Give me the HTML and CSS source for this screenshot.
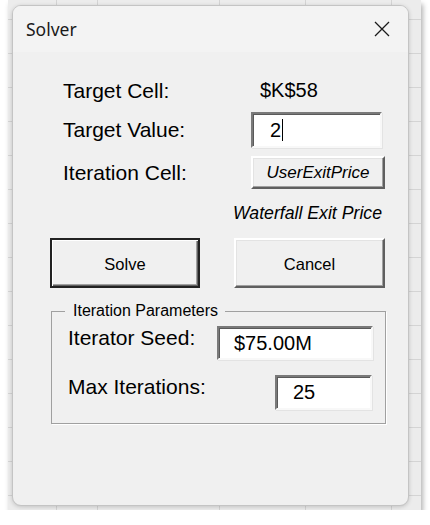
FILE: index.html
```html
<!DOCTYPE html>
<html>
<head>
<meta charset="utf-8">
<link rel="stylesheet" href="styles.css">
</head>
<body>
<div class="backdrop">
  <div class="dialog">
    <div class="titlebar">
      <span class="title">Solver</span>
      <svg class="close" viewBox="0 0 16 16" width="16" height="16"><path d="M1 1 L15 15 M15 1 L1 15" stroke="#1a1a1a" stroke-width="1.3" fill="none"/></svg>
    </div>
    <div class="body">
      <div class="row row-cell"><span class="label">Target Cell:</span><span class="cellref">$K$58</span></div>
      <div class="row row-value"><span class="label">Target Value:</span><div class="field field-target">2<span class="caret"></span></div></div>
      <div class="row row-iter"><span class="label">Iteration Cell:</span><div class="btn btn-raised btn-ref">UserExitPrice</div></div>
      <div class="caption">Waterfall Exit Price</div>
      <div class="actions">
        <div class="btn btn-default">Solve</div>
        <div class="btn btn-raised btn-cancel">Cancel</div>
      </div>
      <fieldset class="group">
        <legend>Iteration Parameters</legend>
        <div class="grow grow-seed"><span class="glabel">Iterator Seed:</span><div class="field field-seed">$75.00M</div></div>
        <div class="grow grow-max"><span class="glabel">Max Iterations:</span><div class="field field-max">25</div></div>
      </fieldset>
    </div>
  </div>
</div>
</body>
</html>
```
FILE: styles.css
```css
body {
  margin: 0;
  background: #fff;
  font-family: "Liberation Sans", Arial, sans-serif;
  color: #000;
}
.backdrop {
  margin-left: 8px;
  width: 413px;
  height: 510px;
  box-sizing: border-box;
  padding: 5px 0 0 4px;
  background-color: #ececec;
  background-image:
    linear-gradient(#d4d4d4, #d4d4d4),
    linear-gradient(#d4d4d4, #d4d4d4),
    linear-gradient(#d4d4d4, #d4d4d4),
    linear-gradient(#d4d4d4, #d4d4d4),
    linear-gradient(#d4d4d4, #d4d4d4),
    repeating-linear-gradient(to bottom, transparent 0, transparent 19px, #d4d4d4 19px, #d4d4d4 20px, transparent 20px, transparent 34px);
  background-size: 1px 100%, 1px 100%, 1px 100%, 1px 100%, 1px 100%, 100% 100%;
  background-position: 48px 0, 89px 0, 211px 0, 297px 0, 383px 0, 0 0;
  background-repeat: no-repeat;
  box-shadow: 2px 4px 5px rgba(0, 0, 0, 0.3);
}
.dialog {
  width: 397px;
  height: 501px;
  box-sizing: border-box;
  border: 1px solid #c4c4c4;
  border-radius: 9px;
  background: #f0f0f0;
  box-shadow: 0 1px 4px rgba(0, 0, 0, 0.18);
  overflow: hidden;
}
.titlebar {
  height: 46px;
  display: flex;
  align-items: center;
  justify-content: space-between;
  padding: 0 18px 0 13px;
  background: #f3f3f3;
}
.title {
  font-family: "Noto Sans", "Open Sans", sans-serif;
  font-size: 17.5px;
  color: #1a1a1a;
}
.close {
  display: block;
}
.body {
  padding: 0 0 0 37px;
}
.row {
  display: flex;
  align-items: center;
  margin-left: 13px;
}
.row-cell {
  height: 33px;
  margin-top: 22px;
}
.label {
  flex: none;
  width: 188px;
  font-size: 21px;
}
.cellref {
  font-size: 20px;
  padding-left: 9px;
}
.row-value {
  height: 36px;
  margin-top: 5px;
}
.field {
  box-sizing: border-box;
  display: flex;
  align-items: center;
  background: #fff;
  border: 2px solid;
  border-color: #7a7a7a #f8f8f8 #f8f8f8 #7a7a7a;
  box-shadow: inset 1px 1px 0 #5a5a5a, 1px 1px 0 #e3e3e3;
  font-size: 20px;
}
.field-target {
  width: 131px;
  height: 36px;
  padding-left: 17px;
}
.caret {
  width: 1px;
  height: 22px;
  background: #000;
  margin-left: 1px;
}
.row-iter {
  height: 33px;
  margin-top: 8px;
}
.btn {
  box-sizing: border-box;
  display: flex;
  align-items: center;
  justify-content: center;
  background: #f0f0f0;
}
.btn-raised {
  border: 2px solid;
  border-color: #fff #5f5f5f #5f5f5f #fff;
  box-shadow: inset -1px -1px 0 #a0a0a0, inset 1px 1px 0 #e3e3e3;
}
.btn-ref {
  width: 134px;
  height: 33px;
  font-size: 17px;
  font-style: italic;
}
.caption {
  margin-top: 8px;
  height: 32px;
  display: flex;
  align-items: center;
  justify-content: flex-end;
  padding-right: 26px;
  font-size: 17.7px;
  font-style: italic;
}
.actions {
  display: flex;
  gap: 34px;
  margin-top: 9px;
}
.btn-default {
  width: 150px;
  height: 50px;
  padding-top: 3px;
  border: 2px solid #222;
  box-shadow: inset 1px 1px 0 #fff, inset -1px -1px 0 #5f5f5f, inset -2px -2px 0 #a0a0a0;
  font-size: 16.5px;
}
.btn-cancel {
  width: 151px;
  height: 50px;
  padding-top: 3px;
  font-size: 16.5px;
}
.group {
  margin: 14px 0 0 1px;
  width: 335px;
  min-width: 0;
  box-sizing: border-box;
  border: 1px solid #a0a0a0;
  box-shadow: 1px 1px 0 #fff;
  padding: 0 12px 13px 16px;
}
.group legend {
  font-size: 16px;
  line-height: 18px;
  padding: 0 7px 0 8px;
  margin-left: -3px;
}
.grow {
  display: flex;
  align-items: flex-start;
}
.grow-seed {
  margin-top: 6px;
}
.glabel {
  font-size: 21px;
  line-height: 24px;
}
.field-seed {
  margin-left: auto;
  width: 156px;
  height: 34px;
  padding-left: 15px;
}
.grow-max {
  margin-top: 15px;
}
.field-max {
  margin-left: auto;
  margin-right: 1px;
  width: 97px;
  height: 35px;
  padding-left: 16px;
}
```
